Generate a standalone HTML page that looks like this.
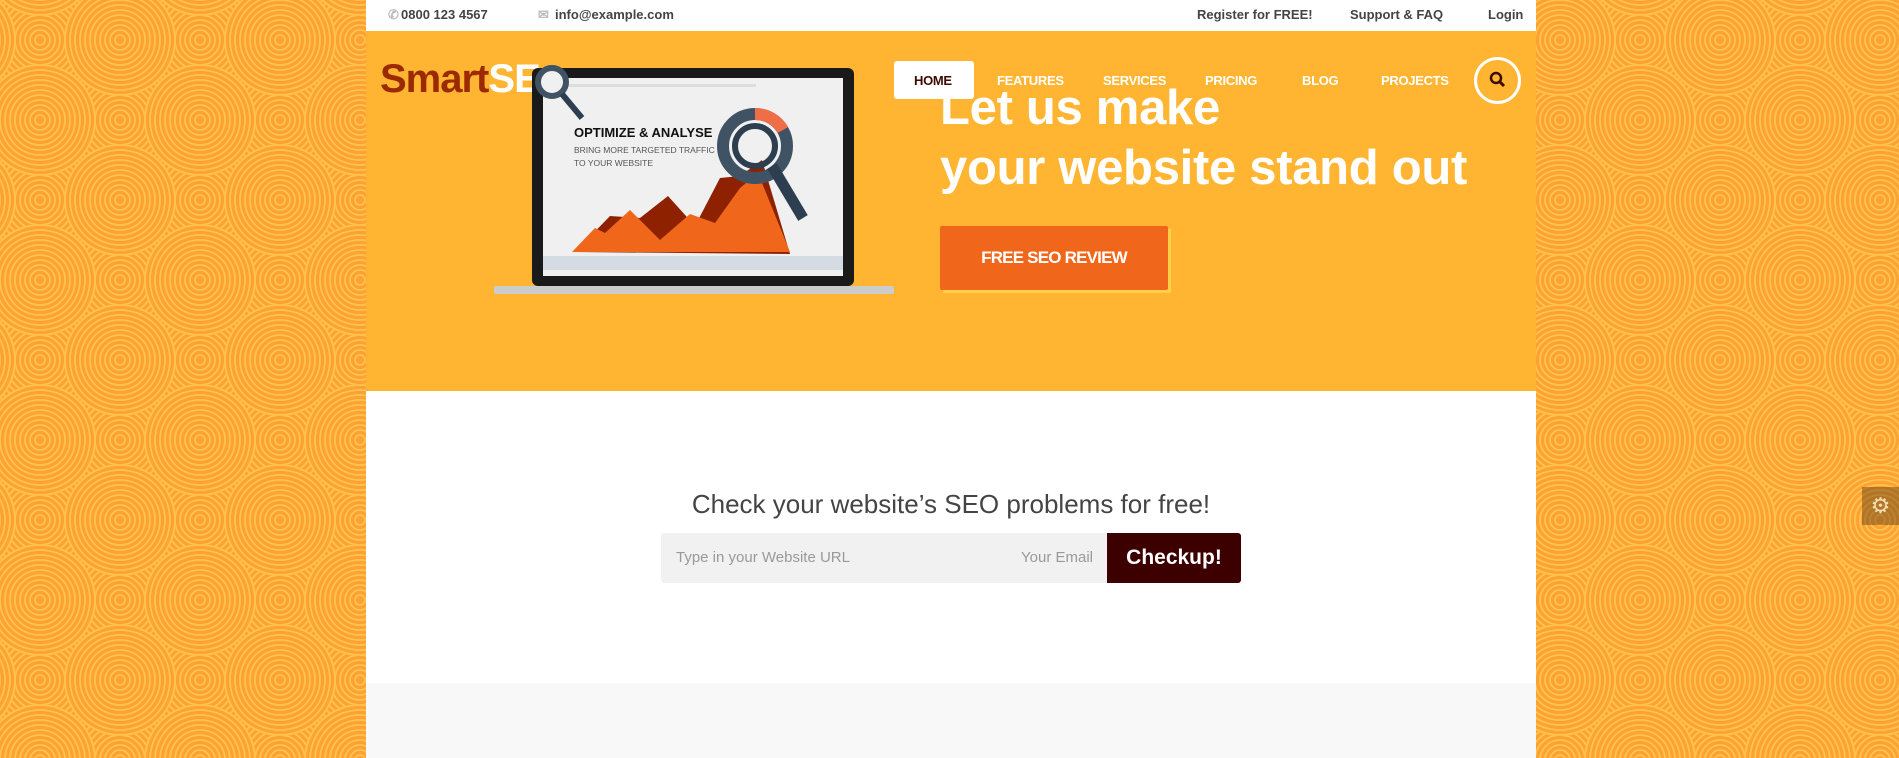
<!DOCTYPE html>
<html><head><meta charset="utf-8"><style>
*{margin:0;padding:0;box-sizing:border-box}
body{width:1899px;height:758px;overflow:hidden;font-family:"Liberation Sans",sans-serif;position:relative;background:#ffa133}
#bg{position:absolute;left:0;top:0}
.abs{position:absolute}
.top{left:366px;top:0;width:1170px;height:31px;background:#fff;font-size:13px;font-weight:bold;color:#444}
.top span{position:absolute;top:7px}
.hero{left:366px;top:31px;width:1170px;height:360px;background:#ffb531}
.white{left:366px;top:391px;width:1170px;height:292px;background:#fff}
.gray{left:366px;top:683px;width:1170px;height:75px;background:#f8f8f8}
.nav{font-size:13px;font-weight:bold;color:#fff;top:73px;letter-spacing:-0.3px}
h1{position:absolute;left:940px;top:78px;color:#fff;font-size:49px;line-height:60px;font-weight:bold;letter-spacing:-0.3px}
</style></head><body>
<svg id="bg" width="1899" height="758">
<defs>
<g id="c"><circle r="56" fill="#ffa133"/><g fill="none" stroke="#ffc44e" stroke-width="1.8"><circle r="5"/><circle r="10"/><circle r="15"/><circle r="20"/><circle r="25"/><circle r="30"/><circle r="35"/><circle r="40"/><circle r="45"/><circle r="50"/><circle r="55"/></g></g>
<pattern id="p" width="160" height="160" patternUnits="userSpaceOnUse">
<rect width="160" height="160" fill="#ffa133"/>
<use href="#c" x="120" y="120"/><use href="#c" x="-40" y="120"/><use href="#c" x="120" y="-40"/><use href="#c" x="-40" y="-40"/>
<use href="#c" x="40" y="40"/><use href="#c" x="200" y="40"/><use href="#c" x="40" y="200"/>
<use href="#c" x="120" y="40"/><use href="#c" x="40" y="120"/><use href="#c" x="-40" y="40"/><use href="#c" x="40" y="-40"/><use href="#c" x="200" y="120"/><use href="#c" x="120" y="200"/>
</pattern></defs>
<rect width="1899" height="758" fill="url(#p)"/>
</svg>
<div class="abs top">
<span style="left:22px;color:#bbb">✆</span><span style="left:35px">0800 123 4567</span>
<span style="left:172px;color:#bbb">✉</span><span style="left:189px">info@example.com</span>
<span style="left:831px">Register for FREE!</span><span style="left:984px">Support &amp; FAQ</span><span style="left:1122px">Login</span>
</div>
<div class="abs hero"></div>
<div class="abs white"></div>
<div class="abs gray"></div>
<div class="abs" style="left:380px;top:57px;font-size:40px;font-weight:bold;color:#9b2a00;letter-spacing:-1px">Smart<span style="color:#fff">SE</span></div>
<svg class="abs" style="left:490px;top:58px" width="405" height="240">
<rect x="42" y="10" width="322" height="218" rx="6" fill="#1a1a1a"/>
<rect x="53" y="20" width="300" height="198" fill="#f0f0f0"/>
<rect x="53" y="198" width="300" height="14" fill="#d5dbe2"/>
<rect x="56" y="26" width="210" height="3" fill="#ddd"/>
<polygon points="85,194 120,158 150,160 178,138 205,168 230,120 250,118 272,102 300,196" fill="#8e2200"/>
<polygon points="82,194 105,170 115,175 140,152 170,182 200,156 225,165 250,130 268,115 300,194" fill="#f0661a"/>
<text x="84" y="79" font-size="13" font-weight="bold" fill="#111">OPTIMIZE &amp; ANALYSE</text>
<text x="84" y="95" font-size="8.5" fill="#555">BRING MORE TARGETED TRAFFIC</text>
<text x="84" y="108" font-size="8.5" fill="#555">TO YOUR WEBSITE</text>
<circle cx="265" cy="88" r="32" fill="none" stroke="#3f5364" stroke-width="12"/>
<path d="M265 56 A32 32 0 0 1 293 72" fill="none" stroke="#ef6e48" stroke-width="12"/>
<circle cx="265" cy="88" r="20" fill="none" stroke="#2c3e50" stroke-width="6"/>
<line x1="282" y1="108" x2="313" y2="160" stroke="#2c3e50" stroke-width="11"/>
<circle cx="62" cy="24" r="14" fill="#f0f0f0" stroke="#3f5364" stroke-width="6"/>
<line x1="72" y1="36" x2="92" y2="60" stroke="#2c3e50" stroke-width="6"/>
<rect x="4" y="228" width="400" height="8" rx="2" fill="#ccc"/>
</svg>
<div class="abs" style="left:894px;top:61px;width:80px;height:38px;background:#fff;border-radius:3px"></div>
<div class="abs nav" style="left:914px;color:#3d0a00">HOME</div>
<div class="abs nav" style="left:997px">FEATURES</div>
<div class="abs nav" style="left:1103px">SERVICES</div>
<div class="abs nav" style="left:1205px">PRICING</div>
<div class="abs nav" style="left:1302px">BLOG</div>
<div class="abs nav" style="left:1381px">PROJECTS</div>
<div class="abs" style="left:1474px;top:57px;width:47px;height:47px;border:3px solid #fff;border-radius:50%"></div>
<svg class="abs" style="left:1489px;top:71px" width="18" height="18"><circle cx="7" cy="7" r="5" fill="none" stroke="#3d0a00" stroke-width="2.5"/><line x1="10.5" y1="10.5" x2="15" y2="15" stroke="#3d0a00" stroke-width="3"/></svg>
<h1>Let us make<br>your website stand out</h1>
<div class="abs" style="left:943px;top:229px;width:228px;height:64px;background:#ffcf4a"></div>
<div class="abs" style="left:940px;top:226px;width:228px;height:64px;background:#f0661a;border-radius:2px;color:#fff;font-weight:bold;font-size:17px;letter-spacing:-0.8px;text-align:center;line-height:64px">FREE SEO REVIEW</div>
<div class="abs" style="left:366px;width:1170px;top:489px;text-align:center;font-size:26px;color:#444">Check your website’s SEO problems for free!</div>
<div class="abs" style="left:661px;top:533px;width:446px;height:50px;background:#f1f1f1;border-radius:3px 0 0 3px;font-size:15px;color:#999">
<span class="abs" style="left:15px;top:16px">Type in your Website URL</span><span class="abs" style="left:360px;top:16px">Your Email</span></div>
<div class="abs" style="left:1107px;top:533px;width:134px;height:50px;background:#3d0000;border-radius:0 3px 3px 0;color:#fff;font-weight:bold;font-size:21px;text-align:center;line-height:50px">Checkup!</div>
<div class="abs" style="left:1862px;top:487px;width:37px;height:38px;background:rgba(90,60,20,0.45);color:#f3dcb0;font-size:22px;text-align:center;line-height:38px">⚙</div>
</body></html>
